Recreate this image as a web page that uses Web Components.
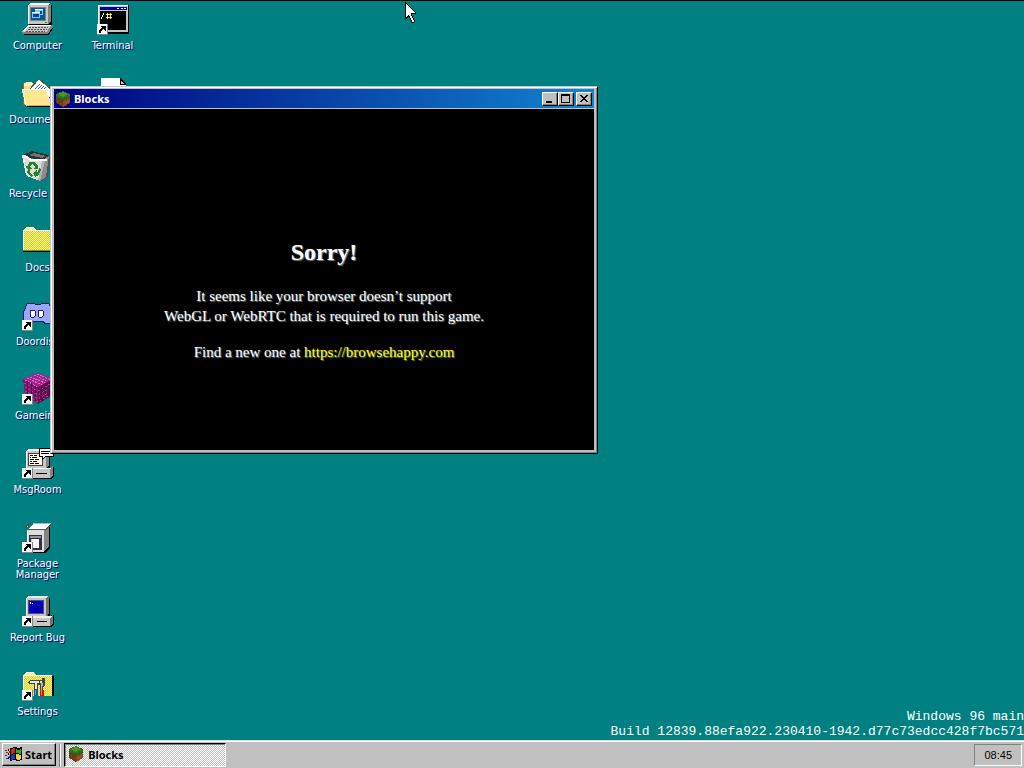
<!DOCTYPE html>
<html lang="en">
<head>
<meta charset="utf-8">
<title>Windows 96</title>
<style>
    html, body { margin: 0; height: 100%; }
    body { overflow: hidden; background: #008080; }
</style>
</head>
<body>
<w96-desktop>
    <desktop-icon icon="computer">Computer</desktop-icon>
    <desktop-icon icon="documents">Documents</desktop-icon>
    <desktop-icon icon="recycle">Recycle Bin</desktop-icon>
    <desktop-icon icon="folder">Docs</desktop-icon>
    <desktop-icon icon="discord" shortcut>Doordisc</desktop-icon>
    <desktop-icon icon="cube" shortcut>Gameing</desktop-icon>
    <desktop-icon icon="msgroom" shortcut>MsgRoom</desktop-icon>
    <desktop-icon icon="pkg" shortcut>Package Manager</desktop-icon>
    <desktop-icon icon="bug" shortcut>Report Bug</desktop-icon>
    <desktop-icon icon="settings" shortcut>Settings</desktop-icon>
    <desktop-icon icon="terminal" shortcut>Terminal</desktop-icon>
    <desktop-icon icon="file"></desktop-icon>

    <app-window slot="windows" caption="Blocks" icon="block">
        <game-error></game-error>
    </app-window>

    <build-info slot="info"></build-info>
    <task-bar slot="taskbar" time="08:45">
        <task-button icon="block">Blocks</task-button>
    </task-bar>
    <mouse-cursor slot="cursor"></mouse-cursor>
</w96-desktop>

<script>
const UI_FONT = '"Noto Sans", "Open Sans", sans-serif';
const LABEL_FONT = '"DejaVu Sans Condensed", "Noto Sans", sans-serif';

// all the big icons are drawn on a 32x32 grid, the small ones on 16x16
const ICONS = {
    computer: `
        <path fill="#000" d="M28 2h2v18h-2zM7 20h23v2H7z"/>
        <path fill="#808080" d="M26 2l3-1v18l-3 2z"/>
        <path fill="#c6c6c6" d="M6 2h20v19H6z"/>
        <path fill="#fff" d="M6 2l3-2h20l-3 2zM6 2h1v19H6z"/>
        <path fill="#808080" d="M8 4h16v14H8z"/>
        <path fill="#005a84" d="M9 5h14v12H9z"/>
        <path fill="#84c6ff" d="M13 6h8v6h-8zM10 9h8v6h-8z"/>
        <path fill="#fff" d="M13 6h8v1h-8zM10 9h8v1h-8z"/>
        <path fill="#0042a5" d="M11 11h6v3h-6zM18 8h2v3h-2z"/>
        <path fill="#000" d="M2 30l5-8h24v3l-4 7H2z"/>
        <path fill="#c6c6c6" d="M0 29l6-7h23l-4 7z"/>
        <path fill="#808080" d="M0 29h25v2H0zM25 29l4-7h2v2l-5 7h-1z"/>
        <path fill="#fff" d="M0 28l6-6h2l-5 6zM6 22h23v1H6z"/>
        <path stroke="#525252" stroke-dasharray="2 1" d="M7 24.500h19M6 26.500h19M4 28.500h19" fill="none"/>
        <path fill="#00b500" d="M23 19h2v1h-2z"/>`,
    documents: `
        <path fill="#f7de84" stroke="#847321" d="M1 27V7l2-2h7l2 2h2v5h15v15z"/>
        <path fill="#fff7b5" d="M2 7l2-2h6l1 2v2H2z"/>
        <path fill="#fff" stroke="#525252" d="M7 13L17 2l14 12v6H7z"/>
        <path stroke="#315a84" d="M12 13l6-6M15 13l5-5M18 13l4-4M21 13l3-3" fill="none"/>
        <path fill="#ffe794" stroke="#fff" d="M0 12h24l5 16H4z"/>
        <path fill="#d6b552" d="M4 28h25v1H5z"/>
        <path fill="#000" d="M5 29h25v1H5z"/>`,
    recycle: `
        <path fill="#313131" d="M1 4l9-4 17 4v3l-12 2z"/>
        <path fill="#737373" d="M7 4l5-2 12 3-4 2z"/>
        <path fill="#525252" d="M26 5h3l-3 21-8 5-2-2z"/>
        <path fill="#8c8c8c" d="M22 8l5-3-3 21-6 4z"/>
        <path fill="#deded6" d="M1 4l8 4h14l-5 22L5 25z"/>
        <path fill="#fff" d="M0 4h3l7 4h15v2H9L2 6l3 18H4z"/>
        <path fill="#b5b5b5" d="M20 10h3l-5 20-2-1z"/>
        <path fill="#218431" d="M7 11h6l2 3 1-1v5h-4l1-2-3-3-2 2H6zM3 16l4-2 3 4H8v4l3 2-1 2-5-4 1-4zM11 22l4-3v2h1l1-4 2 2-3 6h-2v2z"/>`,
    folder: `
        <path fill="#f7f794" d="M2 5l2-3h8l2 3z"/>
        <path fill="#ffffc6" d="M4 2h8v1H4z"/>
        <path fill="url(#dither)" d="M1 5h30v20H1z"/>
        <path fill="#fff" d="M1 5h30v1H1zM1 5h1v20H1z"/>
        <path fill="#000" d="M1 26h31v1H1zM31 6h1v21h-1z"/>
        <path fill="#848400" d="M1 25h30v1H1z"/>`,
    discord: `
        <path fill="#9ca5f7" stroke="#18215a" d="M5 5l6-1 2 1h6l2-1 6 1 3 7 1 9-3 3-5 1-2-3H12l-3 3-8-4 1-9z"/>
        <path fill="#fff" stroke="#18215a" d="M8 12l1-1h3l1 1v5l-1 1H9l-1-1zM16 12l1-1h3l1 1v5l-1 1h-3l-1-1z"/>`,
    cube: `
        <path fill="#a5218c" d="M1 6L16 0l15 6-15 8z"/>
        <path fill="#84186b" d="M1 6l15 8v17L3 23z"/>
        <path fill="#631052" d="M31 6l-15 8v17l13-8z"/>
        <path stroke="#de6bce" stroke-dasharray="2 1" fill="none" d="M5 5l15 7M8 4l15 6M12 2l14 7M15 1l14 6M3 7l13 7"/>
        <path stroke="#ad398c" stroke-dasharray="2 2" fill="none" d="M2 10l14 8 14-8M3 14l13 8 13-8M3 18l13 8 13-8M4 22l12 7 12-7"/>
        <path stroke="#4a0842" stroke-dasharray="3 1" fill="none" d="M5 8v16M9 10v16M13 13v16M19 13v16M23 10v16M27 8v16"/>`,
    msgroom: `
        <path fill="#000" d="M25 4h3v17h-3zM30 20h2v9l-3 3H6v-2z"/>
        <path fill="#848484" d="M24 5l3-2v16l-3 2zM28 21l3-2v9l-3 3z"/>
        <path fill="#c6c6c6" d="M4 4h20v17H4zM9 22h19v9H9z"/>
        <path fill="#fff" d="M4 4l3-2h20l-3 2zM4 4h1v17H4zM9 21h20v1H9z"/>
        <path fill="#424242" d="M6 6h15v13H6z"/>
        <path fill="#fff7e7" d="M7 7h13v11H7z"/>
        <path fill="#000" d="M8 8h3v1H8zM12 8h3v1h-3zM8 10h1v1H8zM10 10h5v1h-5zM8 12h4v1H8zM13 12h4v1h-4zM8 14h2v1H8zM11 14h4v1h-4zM8 16h4v1H8zM13 16h4v1h-4zM14 26h11v1H14z"/>
        <path fill="#fff" stroke="#000" d="M17 1h14v8h-7l-4 4V9h-3z"/>
        <path fill="#000" d="M19 4h10v1H19zM19 6h8v1h-8z"/>`,
    pkg: `
        <path fill="#848484" d="M22 8l5-6v24l-5 5z"/>
        <path fill="#000" d="M27 5h1v22l-5 5H6v-1h16l5-6z"/>
        <path fill="#dedede" d="M5 9h17v22H5z"/>
        <path fill="#fff" d="M6 8l5-5h18l-5 5z"/>
        <path fill="#b5b5b5" d="M10 3l1-1h18v1z"/>
        <path fill="#525252" d="M3 5l4-3h2L5 8H4zM7 8h16v1H7zM28 3h1v2l-5 4h-1z"/>
        <path fill="#c6c6c6" d="M5 5l2-2-2 4z"/>
        <path fill="#fff" d="M5 10h1v20H5z"/>
        <path fill="#313142" d="M7 14h13v15H7z"/>
        <path fill="#94949c" d="M8 15h11v2H8z"/>
        <path fill="#fff" d="M9 18h8v9H9z"/>
        <path fill="#c6c6c6" d="M9 18h1v9H9z"/>`,
    bug: `
        <path fill="#000" d="M27 3h1v18l-2 1zM30 20h2v9l-3 3H6v-2z"/>
        <path fill="#737373" d="M24 4l3-2v17l-3 2zM28 22l3-2v8l-3 3z"/>
        <path fill="#c6c6c6" d="M4 3h20v18H4zM9 23h19v8H9z"/>
        <path fill="#efefef" d="M4 3l3-2h20l-3 2zM4 3h1v18H4zM9 22l3-1h18l-2 2H9z"/>
        <path fill="#525252" d="M6 5h16v14H6z"/>
        <path fill="#0000ce" d="M7 6h14v12H7z"/>
        <path fill="#000084" d="M12 10h5v2h1v2h-3v2h-2v-3h-2z"/>
        <path fill="#fff" d="M8 7h1v2H8zM10 8h1v1h-1z"/>
        <path fill="#000" d="M15 26h10v1H15z"/>`,
    settings: `
        <path fill="#f7f794" d="M2 6l2-3h8l2 3z"/>
        <path fill="#fff" d="M4 3h8v1H4z"/>
        <path fill="url(#dither)" d="M1 6h29v21H1z"/>
        <path fill="#fff" d="M1 6h29v1H1zM1 6h1v20H1z"/>
        <path fill="#000" d="M1 27h31V7h-1v20zM30 7h1v20h-1z"/>
        <path fill="#424242" d="M6 14l2-3h12V9h3v7l-2 2v4h-3v-6h-2v5h-4v-6H8z"/>
        <path fill="#e7e7e7" d="M7 13l2-1h8v2h-2v6h-2v-6H8zM18 12h2v2h-2z"/>
        <path fill="#b5b5b5" d="M19 14h2v2l-1 1v4h-1z"/>
        <path fill="#0063a5" d="M12 21h4v6h-4z"/>
        <path fill="#42b5e7" d="M13 21h1v5h-1z"/>
        <path fill="#c61818" d="M18 21h4v6h-4z"/>
        <path fill="#ff7373" d="M19 21h1v5h-1z"/>`,
    terminal: `
        <path fill="#000" d="M2 29h29V2h1v29H2z"/>
        <path fill="#c6c6c6" d="M1 2h30v27H1z"/>
        <path fill="#fff" d="M1 2h30v1H1zM1 2h1v27H1z"/>
        <path fill="#0000a5" d="M3 4h27v3H3z"/>
        <path fill="#fff" d="M20 5h2v1h-2zM24 5h2v1h-2zM27 5h2v1h-2z"/>
        <path fill="#000" d="M3 8h26v19H3z"/>
        <path fill="#fff" d="M4 14h1v-2h1v-2h1v2H6v2H5v2H4z"/>
        <path fill="#ffe763" d="M10 10h1v6h-1zM13 10h1v6h-1zM9 11h6v1H9zM9 14h6v1H9z"/>`,
    file: `
        <path fill="#fff" d="M4 1h19l6 6v23H4z"/>
        <path fill="#000" d="M23 1l6 6v1h-6z"/>
        <path fill="#c6c6c6" d="M24 3l3 4h-3z"/>`,
    block: `
        <path fill="#6b3a1c" d="M1 4l7 3v9l-7-4z"/>
        <path fill="#8c4a21" d="M15 4L8 7v9l7-4z"/>
        <path fill="#31731b" d="M1 3l7-3 7 3v2L8 9 1 5z"/>
        <path fill="#4a9429" d="M3 3l5-2 5 2-5 3z"/>
        <path fill="#2b5f18" d="M1 5l7 3v2L6 8l-1 1-2-2-2 1zM15 5v2l-2 0-1 2-2-1-2 2V8z"/>
        <path fill="#ad5a2c" d="M10 11h2v1h-2zM13 9h1v2h-1z"/>
        <path fill="#9c4221" d="M3 9h1v2H3zM5 12h2v1H5z"/>`,
    flag: `
        <path fill="#000" d="M5 2l5-1 3 1 4-1v13l-5 1-3-1-4 1z"/>
        <path fill="#e71818" d="M6 3l4-1v5l-4 1z"/>
        <path fill="#21b521" d="M11 3l2 1 3-1v5l-5-1z"/>
        <path fill="#1839ce" d="M6 9l4-1v5l-4 1z"/>
        <path fill="#f7d618" d="M11 8l5 1v4l-3 1-2-1z"/>
        <path fill="#000" d="M3 3h1v2H3zM3 7h1v2H3zM3 11h1v2H3z"/>
        <path fill="#c61818" d="M0 4h2v1H0zM1 6h2v1H1zM4 5h1v2H4z"/>
        <path fill="#1839ce" d="M0 9h2v1H0zM1 12h2v1H1zM4 10h1v2H4z"/>`
};

const ARROW = `
    <path fill="#fff" d="M0 21h11v11H0z"/>
    <path fill="#848484" d="M10 21h1v11H0v-1h10z"/>
    <path fill="#000" d="M4 23h5v5H8v-1H7v-1H6v1H5v1H4v2H2v-3h1v-1h1v-1h1v-1H4z"/>`;

function drawIcon(name, size, shortcut) {
    return `<svg width="${size}" height="${size}" viewBox="0 0 ${size} ${size}" shape-rendering="crispEdges" aria-hidden="true">
        <defs><pattern id="dither" width="2" height="2" patternUnits="userSpaceOnUse">
            <path fill="#f7f773" d="M0 0h2v2H0z"/><path fill="#d6ce42" d="M0 0h1v1H0zM1 1h1v1H1z"/>
        </pattern></defs>
        ${ICONS[name] || ''}${shortcut ? ARROW : ''}</svg>`;
}

class W96Desktop extends HTMLElement {
    constructor() {
        super();
        // the icon grid may run a little under the taskbar
        this.attachShadow({mode: 'open'}).innerHTML = `
            <style>
                :host {
                    display: grid;
                    grid-template-rows: minmax(0, 1fr) auto;
                    position: relative;
                    box-sizing: border-box;
                    height: 100vh;
                    border-top: 1px solid #000;
                    background: #008080;
                    overflow: hidden;
                    font-family: ${UI_FONT};
                    font-size: 11px;
                    cursor: default;
                }
                main {
                    display: grid;
                    grid-auto-flow: column;
                    grid-template-rows: repeat(auto-fill, 74px);
                    grid-auto-columns: 75px;
                    min-height: 0;
                    margin-bottom: -8px;
                }
            </style>
            <main><slot></slot></main>
            <slot name="windows"></slot>
            <slot name="info"></slot>
            <slot name="taskbar"></slot>
            <slot name="cursor"></slot>`;
    }
}

class DesktopIcon extends HTMLElement {
    connectedCallback() {
        this.attachShadow({mode: 'open'}).innerHTML = `
            <style>
                :host { display: block; }
                button {
                    display: flex;
                    flex-direction: column;
                    align-items: center;
                    gap: 5px;
                    width: 100%;
                    padding: 2px 4px 0;
                    border: 0;
                    background: none;
                    color: #fff;
                    font: 11px/11px ${LABEL_FONT};
                    text-shadow: 1px 1px #000063;
                }
            </style>
            <button type="button">${drawIcon(this.getAttribute('icon'), 32, this.hasAttribute('shortcut'))}<span><slot></slot></span></button>`;
    }
}

class AppWindow extends HTMLElement {
    connectedCallback() {
        this.attachShadow({mode: 'open'}).innerHTML = `
            <style>
                :host {
                    position: absolute;
                    left: 50px;
                    top: 85px;
                    width: 548px;
                    height: 368px;
                    box-sizing: border-box;
                    display: flex;
                    flex-direction: column;
                    padding: 2px 3px 3px;
                    border: 1px solid;
                    border-color: #c6c6c6 #000 #000 #c6c6c6;
                    background: #c0c0c0;
                    box-shadow: inset 1px 1px #fff, inset -1px -1px #808080;
                }
                header {
                    display: flex;
                    align-items: center;
                    gap: 3px;
                    height: 19px;
                    padding: 0 2px 0 1px;
                    background: linear-gradient(90deg, #000080, #1084d0);
                    color: #fff;
                    font-weight: bold;
                }
                h1 { flex: 1; margin: 0; font: inherit; }
                nav { display: flex; }
                button {
                    display: grid;
                    place-items: center;
                    width: 16px;
                    height: 14px;
                    padding: 0;
                    border: 1px solid;
                    border-color: #fff #000 #000 #fff;
                    background: #c0c0c0;
                    box-shadow: inset -1px -1px #808080;
                }
                button:last-child { margin-left: 2px; }
                section {
                    flex: 1;
                    margin-top: 1px;
                    background: #000;
                }
            </style>
            <header>
                ${drawIcon(this.getAttribute('icon'), 16)}
                <h1>${this.getAttribute('caption')}</h1>
                <nav>
                    <button type="button" aria-label="Minimize"><svg width="12" height="10" shape-rendering="crispEdges"><path d="M2 7h6v2H2z"/></svg></button>
                    <button type="button" aria-label="Maximize"><svg width="12" height="10" shape-rendering="crispEdges"><path fill-rule="evenodd" d="M1 0h9v9H1zM2 2v6h7V2z"/></svg></button>
                    <button type="button" aria-label="Close"><svg width="12" height="10" shape-rendering="crispEdges"><path d="M2 1h2v1h1v1h2V2h1V1h2v1H9v1H8v1H7v1h1v1h1v1h1v1H8V7H7V6H5v1H4v1H2V7h1V6h1V5h1V4H4V3H3V2H2z"/></svg></button>
                </nav>
            </header>
            <section><slot></slot></section>`;
    }
}

class GameError extends HTMLElement {
    constructor() {
        super();
        this.attachShadow({mode: 'open'}).innerHTML = `
            <style>
                :host {
                    display: block;
                    padding-top: 129px;
                    color: #fff;
                    font: 15px/20px "Liberation Serif", serif;
                    text-align: center;
                    text-shadow: 1px 1px 1px #808080;
                }
                h2 { margin: 0 0 20px; font-size: 24px; line-height: 28px; }
                p { margin: 0 0 16px; }
                a { color: #ff0; text-decoration: none; }
            </style>
            <h2>Sorry!</h2>
            <p>It seems like your browser doesn’t support<br>WebGL or WebRTC that is required to run this game.</p>
            <p>Find a new one at <a href="https://browsehappy.com">https://browsehappy.com</a></p>`;
    }
}

class BuildInfo extends HTMLElement {
    constructor() {
        super();
        this.attachShadow({mode: 'open'}).innerHTML = `
            <style>
                :host {
                    position: absolute;
                    right: 0;
                    bottom: 29px;
                    color: #fff;
                    font: 13px/15px "Liberation Mono", monospace;
                    text-align: right;
                }
            </style>
            <div>Windows 96 main</div>
            <div>Build 12839.88efa922.230410-1942.d77c73edcc428f7bc571</div>`;
    }
}

class TaskBar extends HTMLElement {
    connectedCallback() {
        this.attachShadow({mode: 'open'}).innerHTML = `
            <style>
                :host {
                    display: flex;
                    position: relative;
                    height: 25px;
                    padding: 1px 2px;
                    border-top: 1px solid #dfdfdf;
                    box-shadow: inset 0 1px #fff;
                    background: #c0c0c0;
                    color: #000;
                }
                .start {
                    display: flex;
                    align-items: center;
                    gap: 3px;
                    margin: 1px 0;
                    padding: 0 3px 0 2px;
                    border: 1px solid;
                    border-color: #fff #000 #000 #fff;
                    background: #c0c0c0;
                    box-shadow: inset -1px -1px #808080;
                    color: #000;
                    font: inherit;
                    font-weight: bold;
                }
                hr {
                    width: 1px;
                    margin: 2px 3px 0;
                    border: 0;
                    border-left: 1px solid #808080;
                    background: #fff;
                }
                .tasks { display: flex; flex: 1; gap: 3px; margin-top: 1px; }
                time {
                    display: grid;
                    place-items: center;
                    margin: 2px 0 1px;
                    padding: 0 9px;
                    border: 1px solid;
                    border-color: #808080 #fff #fff #808080;
                    font-family: "Liberation Sans", sans-serif;
                    font-size: 11px;
                }
            </style>
            <button class="start" type="button">${drawIcon('flag', 17)}Start</button>
            <hr>
            <div class="tasks"><slot></slot></div>
            <time>${this.getAttribute('time')}</time>`;
    }
}

class TaskButton extends HTMLElement {
    connectedCallback() {
        this.attachShadow({mode: 'open'}).innerHTML = `
            <style>
                :host { display: flex; flex: 0 1 162px; }
                button {
                    display: flex;
                    align-items: center;
                    gap: 4px;
                    width: 100%;
                    padding: 0 3px 2px;
                    border: 1px solid;
                    border-color: #000 #fff #fff #000;
                    background: repeating-conic-gradient(#fff 0 25%, #c0c0c0 0 50%) 0 0 / 2px 2px;
                    box-shadow: inset 1px 1px #808080;
                    color: #000;
                    font: inherit;
                    font-weight: bold;
                }
            </style>
            <button type="button" aria-pressed="true">${drawIcon(this.getAttribute('icon'), 16)}<slot></slot></button>`;
    }
}

class MouseCursor extends HTMLElement {
    constructor() {
        super();
        this.attachShadow({mode: 'open'}).innerHTML = `
            <style>
                :host { position: absolute; left: 405px; top: 1px; pointer-events: none; }
                svg { display: block; }
            </style>
            <svg width="12" height="21" shape-rendering="crispEdges">
                <path d="M0 0h1v1h1v1h1v1h1v1h1v1h1v1h1v1h1v1h1v1h1v1h1v2H7v2h1v2h1v2h1v2H9v1H7v-1H6v-2H5v-2H4v-1H3v1H2v1H0z"/>
                <path fill="#fff" d="M1 2h1v1h1v1h1v1h1v1h1v1h1v1h1v1h1v1h1v1H6v3h1v2h1v2h1v2H7v-2H6v-2H5v-2H4v-1H3v1H2v1H1z"/>
            </svg>`;
    }
}

customElements.define('w96-desktop', W96Desktop);
customElements.define('desktop-icon', DesktopIcon);
customElements.define('app-window', AppWindow);
customElements.define('game-error', GameError);
customElements.define('build-info', BuildInfo);
customElements.define('task-bar', TaskBar);
customElements.define('task-button', TaskButton);
customElements.define('mouse-cursor', MouseCursor);
</script>
</body>
</html>
